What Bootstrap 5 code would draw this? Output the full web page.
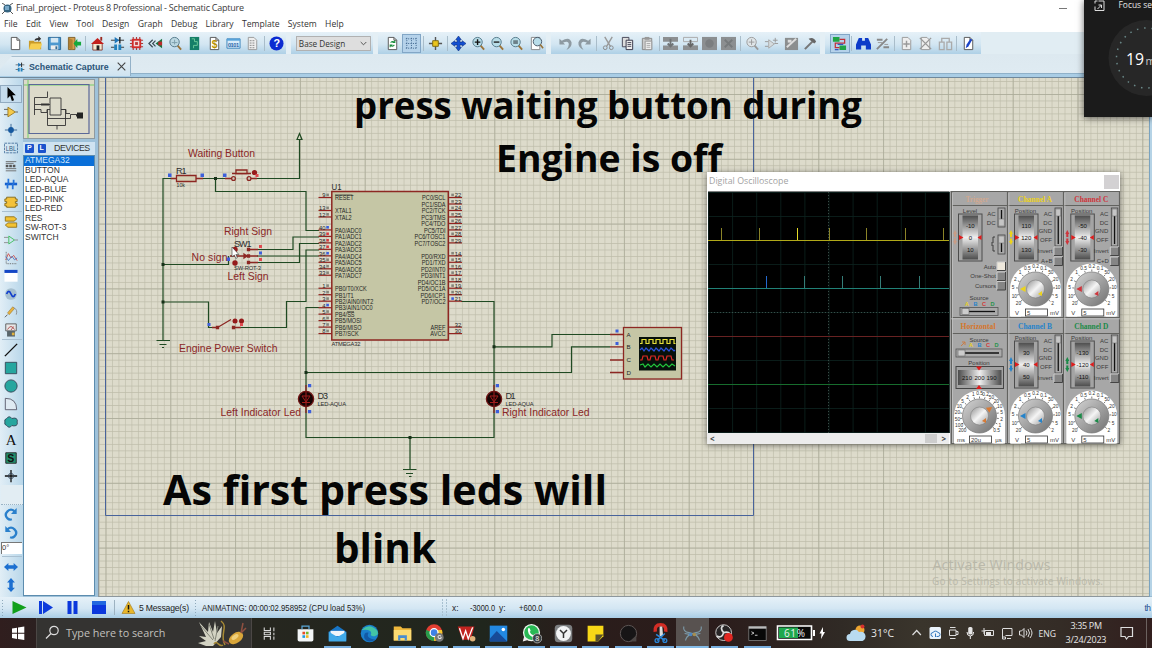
<!DOCTYPE html>
<html lang="en">
<head>
<meta charset="utf-8">
<title>Final_project - Proteus 8 Professional - Schematic Capture</title>
<link href="https://cdn.jsdelivr.net/npm/bootstrap@5.3.0/dist/css/bootstrap.min.css" rel="stylesheet">
<style>
html,body{width:1152px;height:648px;overflow:hidden}
body{font-family:"Open Sans","Noto Sans",sans-serif;font-size:8.6px;line-height:1.2;color:#333;background:#dfebf2}
svg{display:block;flex:none}
svg text{white-space:pre}
.titlebar{height:17px;background:#fff;font-size:9px;letter-spacing:-.23px;padding-left:2px;gap:3px;color:#3c3c3c}
.menubar{height:15px;background:#fff;padding-left:4px;gap:8.3px;font-size:8.6px;color:#333}
.toolrow{height:22px;background:#e1edf3}
.toolstrip{height:22px;background:linear-gradient(#e6f1f8,#d3e6f2 55%,#aed0e6);padding-left:6.3px;width:981px}
.tool{width:19.4px;height:19px;flex:none}
.tool.on{background:#b5d2ea;box-shadow:inset 0 0 0 1px #82a6c6}
.tsep{width:4.15px;height:15px;flex:none;background:linear-gradient(#a9bdca,#a9bdca) center/1px 100% no-repeat}
.tgap{width:9.8px;height:22px;flex:none;background:linear-gradient(90deg,#e4eff5 5px,transparent 5px)}
.combo{width:75px;height:15px;background:#dedede;border:1px solid #b1b1b1;font:8.2px "Open Sans",sans-serif;padding:0 3px 0 2px;margin-right:2px}
.tabrow{height:24px;background:linear-gradient(#dde9f0,#dfebf2);border-bottom:1px solid #6f889b;box-shadow:inset 0 -3px #a9cde5,inset 0 -4px #8fb1c9}
.doctab{width:131px;height:20px;background:linear-gradient(#e5eff5,#cfe3f0);border-right:1px solid #93b1c8;border-top:1px solid #a9c0d0;clip-path:polygon(12px 0,100% 0,100% 100%,0 100%,0 13px);padding-left:15px;margin-top:2px;font:bold 8.8px "Liberation Sans",sans-serif;color:#2c5578;gap:4px}
.main{height:519px}
.side{width:23px;background:linear-gradient(90deg,#e1eef6,#b9d7ea);padding-top:6.5px}
.side .sic{height:18px;width:22px}
.side .sic.on{background:#c5dced;box-shadow:inset 0 0 0 1px #92abc1}
.side .ssep{height:2px;border-top:1px solid #a9c0d1;width:20px;margin-left:2px}
.angle{width:21px;height:12px;background:#fff;border:1px solid #777;border-width:1px 0 0 1px;font:7.5px "Liberation Sans",sans-serif;margin:1px 0 0 1px;flex:none}
.panel{width:75px;background:#9fc2da;padding:.5px 3px 1px 0}
.preview{height:60px;border:1px solid #8f9aa0;background:#dcdaca}
.devhead{height:13.5px;margin-top:3px;background:#cfe3f1;font:8.8px "Liberation Sans",sans-serif;color:#333;padding-left:2px;gap:4px}
.devhead b{background:#1b53cd;color:#fff;width:8.5px;height:8.5px;border-radius:1px;font-size:7px;line-height:8.5px;text-align:center}
.devlist{background:#fff;border:1px solid #5c8cae;font:8.5px/9.62px "Liberation Sans",sans-serif;color:#333}
.devlist div{padding-left:1px}
.devlist .sel{background:#0a6fd8;color:#d5e8fb}
.statusbar{height:21px;background:linear-gradient(#e6f1f8,#d3e6f3 55%,#a9cde5);font:8.4px "Liberation Sans",sans-serif;color:#222}
.taskbar{height:30px;background:linear-gradient(90deg,#301e1e 0,#2c2020 3%,#2b2926 12%,#26261f 22%,#20261d 42%,#2a1d1b 50%,#2b1c1b 62%,#302a25 73%,#3a352c 80%,#342c26 92%,#321f1e 100%);color:#ddd}
.searchbox{width:216px;height:30px;background:#343331;border-left:1px solid #4b4745;border-right:1px solid #4b4745;font-size:10.8px;color:#c2c0bd}
.applist{padding-left:1px}
.app{width:32.27px;height:30px;flex:none}
.app.first{margin-right:3.7px;margin-left:.3px}
.app.run{background:linear-gradient(#78aede,#78aede) center bottom/27px 2.4px no-repeat}
.app.front{background:linear-gradient(#84bce8,#84bce8) center bottom/100% 2.4px no-repeat,#585250}
.focusbox{left:1083.5px;top:0;width:69px;height:116.5px;z-index:4;box-shadow:0 1px 7px #0009}
.minimize{left:1056px;top:5px}
.scope{left:707px;top:172px;width:413px;height:272px;z-index:3;background:#fff;box-shadow:0 1px 6px #0008}
.scopebar{height:19px;color:#a3a3a3;font-size:8.8px;padding:0 1px 0 2px}
.closebtn{width:15px;height:14px;background:#d3d1d3}
.hscroll{height:11px;background:#ececec;width:242px;padding:0 3px}
.hscroll i{font-style:normal;font-weight:bold;font-size:8px;color:#444}
.thumb{width:12px;height:9px;background:#cdcdcd}
</style>
</head>
<body class="d-flex flex-column position-relative">
<header>
  <div class="titlebar d-flex align-items-center"><svg width="11" height="12" viewBox="0 0 11 12"><path d="M0 0l3 2M11 0L8 2M0 11l3-3M11 11L8 8" stroke="#555"/><circle cx="5.5" cy="5.5" r="4" fill="#356481"/><path d="M3 3h4v4H3z" fill="#78a8c8"/></svg><span>Final_project - Proteus 8 Professional - Schematic Capture</span></div>
  <nav class="menubar d-flex align-items-center"><span>File</span><span>Edit</span><span>View</span><span>Tool</span><span>Design</span><span>Graph</span><span>Debug</span><span>Library</span><span>Template</span><span>System</span><span>Help</span></nav>
  <div class="toolrow"><div class="toolstrip d-flex align-items-center" id="tools"></div></div>
  <div class="tabrow d-flex"><div class="doctab d-flex align-items-center"><span data-i="caps"></span><span>Schematic Capture</span><svg class="ms-1" width="9" height="9" viewBox="0 0 9 9"><path d="M.7.7l7.600 7.600M8.300.7L.7 8.300" stroke="#444" stroke-width="1.100"/></svg></div></div>
</header>
<main class="main d-flex">
  <aside class="side d-flex flex-column" id="side"></aside>
  <section class="panel d-flex flex-column">
    <div class="preview"><svg width="70" height="58" viewBox="24 79.5 70 58"><path d="M28 79v59M24 84.500h70" stroke="#72cf68"/><path d="M29 84h60v49H29z" fill="none" stroke="#5b6898" stroke-width="1.200"/><g fill="none" stroke="#333" stroke-width=".9"><path d="M50 97.500h11v17H50zM34.500 114.500V97h13v-6M35 104h15M34 109h7v3h6v-3h3M47.500 109v16h18v-16h-4M47.500 118h23v-4h8M61 109h5v4h4M57 125v4"/><path d="M41 104h8M76 115h6" stroke-width="2"/></g><path d="M77 112h6v6h-6z" fill="#222"/></svg></div>
    <div class="devhead d-flex align-items-center"><b>P</b><b>L</b><span class="ms-1" style="letter-spacing:-.4px">DEVICES</span></div>
    <div class="devlist flex-fill"><div class="sel">ATMEGA32</div><div>BUTTON</div><div>LED-AQUA</div><div>LED-BLUE</div><div>LED-PINK</div><div>LED-RED</div><div>RES</div><div>SW-ROT-3</div><div>SWITCH</div></div>
  </section>
  <svg id="sheet" width="1054" height="519" viewBox="98 78 1054 519" font-family="Liberation Sans, sans-serif">
    <defs>
      <pattern id="g1" x="105.500" y="94" width="6.480" height="6.480" patternUnits="userSpaceOnUse"><path d="M0 0H6.480M0 0V6.480" stroke="#bdbca9" stroke-width="1.300"/></pattern>
      <pattern id="g2" x="105.500" y="94" width="64.800" height="64.800" patternUnits="userSpaceOnUse"><path d="M0 .3H64.800M.3 0V64.800" stroke="#a9a997" stroke-width=".9"/></pattern>
    </defs>
    <rect x="98" y="78" width="1054" height="519" fill="#dddbcb"/>
    <rect x="98" y="78" width="1054" height="519" fill="url(#g1)"/>
    <rect x="98" y="78" width="1054" height="519" fill="url(#g2)"/>
    <path d="M98.500 78V597M98 596.500H1150" stroke="#8d979d"/>
    <path d="M105.500 78V515.500H753.500V78" fill="none" stroke="#48639b"/>
    <path d="M1149.500 78V597h3V78z" fill="#b5d3e6" stroke="#7ba3bf"/>
    <g id="wires" fill="none" stroke="#1f4a22" stroke-width="1.200">
      <path d="M171 178.500H163V340M203 178.500H225M257 178.500H299.500V139M297 139.500L299.500 133.500 302 139.500zM215.500 178.500V191.500H306V230.500H319M163 264.500H228.500V256M257 249.500H293V237H319M257 256H319M257 262.500H299.500V243.500H319M163 302H208.500V327.500H212M237 327.500H286.500V301.500H306V250H319M319 307.500H306V391M306 407V437.500H494V407M494 391V301.500H461M494 346.800H552V334.500H610M306 372.500H571.500V346.800H610M410 437.500V469.500M403 469.500h13.500M406 473.500h7M409 476.500h2.500M156.500 340.500h13.500M159.500 344.500h7M162 347.500h2"/>
    </g>
    <g fill="#173018"><path d="M214 177h3v3h-3zM161.500 263h3v3h-3zM161.500 300.500h3v3h-3zM492.500 345.300h3v3h-3zM304.500 371h3v3h-3zM408.500 436h3v3h-3z"/></g>
    <g id="parts" fill="none" stroke="#8d2722" stroke-width="1.300">
      <path d="M171 178.500h5M196 178.500h7M225 178.500h6M251 178.500h6M232 173.500h19M212 327.500h5M217.500 327.500L231 319.500M230 256H246M250 249.500h8M250 256h8M250 262.500h8M233 327.500h8M610 334.500h13M610 346.800h13M610 360h13M610 372.500h13M306 385v28M494 385v28"/>
      <path d="M176.500 175.500h19.500v6h-19.500zM236 173.500v-3.500h11v3.500z" fill="#d3cfb4"/>
      <circle cx="233.500" cy="178.500" r="1.900"/><circle cx="249" cy="178.500" r="1.900"/>
      <path d="M247.500 248.500h2v2h-2zM247.500 255h2v2h-2zM247.500 261.500h2v2h-2zM216.500 326.500h2v2h-2zM232.500 326.500h2v2h-2zM244 254l3 2-3 2z" fill="#8d2722"/>
      <rect x="331.800" y="191.500" width="116.500" height="148.500" fill="#c5c6a5" stroke-width="1.500"/>
      <rect x="623.500" y="327.500" width="58" height="51.500" fill="#c5c6a5"/>
    </g>
    <g fill="#951b1b"><circle cx="254.500" cy="172.500" r="2.600"/><circle cx="235" cy="249.500" r="2.700"/><circle cx="235" cy="263" r="2.700"/><circle cx="235" cy="321" r="2.500"/><circle cx="241.500" cy="321" r="2.500"/></g>
    <g fill="#e04a50"><path d="M255.500 174h3v3h-3zM259 245h3v3h-3zM259 258h3v3h-3zM240 323h3v3h-3z"/></g>
    <g fill="#3c5fdb"><path d="M168 173.500h3.500v3.500H168zM200.500 173.500h3.500v3.500h-3.500zM223 173.500h3.500v3.500H223zM259 251.500h3v3h-3zM226.500 257.500h3.500v3.500h-3.500zM207.500 323h3v3h-3zM308 384h3.200v3.200H308zM308 410h3.200v3.200H308zM495.800 384h3.200v3.200h-3.200zM495.800 410h3.200v3.200h-3.200zM615.500 329.500h3v3h-3zM615.500 342h3v3h-3z"/></g>
    <g id="leds"></g>
    <g id="pins" font-size="6.300" fill="#262626"></g>
    <rect x="639" y="337" width="37" height="33.500" fill="#07110b"/>
    <g fill="none" stroke-width="1.200"><path d="M640 343.500h2v-4h4v4h3v-4h4v4h3v-4h4v4h3v-4h4v4h3v-4h4v4h1.500" stroke="#e6df3b"/><path d="M640 350l2-2 2 3 2-3 3 3 2-3 3 3 2-3 3 3 2-3 3 3 2-3 3 3 2-3 3 3 1-1" stroke="#2b52dd"/><path d="M640 360h2l1-4h4l1 4h2l1-4h4l1 4h2l1-4h4l1 4h2l1-4h4l1 4h2" stroke="#dd2a25"/><path d="M640 365l3-1 2 3 3-3 3 3 3-3 3 3 3-3 3 3 3-3 3 3 3-3 3 2" stroke="#22c53c"/></g>
    <g fill="#252525" font-size="6.200"><text x="626.500" y="336.700">A</text><text x="626.500" y="349.200">B</text><text x="626.500" y="362.200">C</text><text x="626.500" y="374.900">D</text></g>
    <g fill="#2c2c2c" font-size="9"><text x="176" y="174.300" textLength="10.500">R1</text><text x="234" y="247.300" textLength="17.500">SW1</text><text x="331.500" y="190" textLength="10" lengthAdjust="spacingAndGlyphs">U1</text><text x="317.500" y="398.700" textLength="10.500">D3</text><text x="505.500" y="398.700" textLength="10">D1</text></g>
    <g fill="#2c2c2c" font-size="5.800"><text x="176.500" y="187" textLength="8.500" lengthAdjust="spacingAndGlyphs">10k</text><text x="234" y="269.800" textLength="27">SW-ROT-3</text><text x="331.500" y="346" textLength="29">ATMEGA32</text><text x="317.500" y="405.500" textLength="28.500">LED-AQUA</text><text x="505.500" y="405.500" textLength="28">LED-AQUA</text></g>
    <g fill="#8b2727" font-size="10.400"><text x="188" y="157" textLength="67">Waiting Button</text><text x="224" y="235" textLength="48">Right Sign</text><text x="191.500" y="261" textLength="36">No sign</text><text x="227.500" y="280" textLength="41">Left Sign</text><text x="179" y="351.500" textLength="98.500">Engine Power Switch</text><text x="220.500" y="416" textLength="80.500">Left Indicator Led</text><text x="502" y="416" textLength="87.500">Right Indicator Led</text></g>
    <path d="M232 247v10l2.300-2 1.500 3.400 1.600-.7-1.500-3.200h3z" fill="#fff" stroke="#333" stroke-width=".6"/>
    <g font-family="Open Sans, sans-serif" font-weight="700" fill="#050505" font-size="38"><text x="354" y="119" textLength="508" lengthAdjust="spacingAndGlyphs">press waiting button during</text><text x="496" y="172" textLength="226" lengthAdjust="spacingAndGlyphs">Engine is off</text><g font-size="41.500"><text x="163" y="504.500" textLength="444" lengthAdjust="spacingAndGlyphs">As first press leds will</text><text x="334" y="563" textLength="102" lengthAdjust="spacingAndGlyphs">blink</text></g></g>
    <g font-family="Open Sans, sans-serif" fill="#b9b8aa"><text x="932.500" y="569.500" font-size="14.200" textLength="118">Activate Windows</text><text x="932" y="585" font-size="10" textLength="171">Go to Settings to activate Windows.</text></g>
  </svg>
</main>
<footer>
  <div class="statusbar d-flex align-items-center">
    <svg width="197" height="21" viewBox="0 597 197 21"><path d="M2.500 600v16" stroke="#8fa9bb" stroke-dasharray="1 2"/><path d="M12.500 601l14 6.500-14 6.500z" fill="#12a01c"/><path d="M39 601h3v13h-3zM43 601l10 6.500-10 6.500z" fill="#0d3bdc"/><path d="M67.500 601h4v13h-4zM73.500 601h4v13h-4zM92 601h14v13H92z" fill="#0b37dc"/><path d="M92 601h14v4H92z" fill="#2167e0"/><path d="M114.500 600v15" stroke="#9db2c1"/><path d="M128.500 601.500l6.500 12h-13z" fill="#e9b72a" stroke="#a58127" stroke-width=".7"/><path d="M128.500 605v4.500M128.500 610.700v1.500" stroke="#111" stroke-width="1.500"/><text x="139" y="611" font-size="8.600" textLength="50" fill="#222">5 Message(s)</text><path d="M195.500 600v16" stroke="#8fa9bb" stroke-dasharray="1 2"/></svg>
    <svg width="955" height="21" viewBox="197 597 955 21"><path d="M442.500 599v17M446.500 599v17" stroke="#a8c0d0" stroke-dasharray="2 1"/><g font-size="8.400" fill="#222"><text x="202" y="611" textLength="163" lengthAdjust="spacingAndGlyphs">ANIMATING: 00:00:02.958952 (CPU load 53%)</text><text x="452" y="611">x:</text><text x="470" y="611" textLength="25" lengthAdjust="spacingAndGlyphs">-3000.0</text><text x="499" y="611">y:</text><text x="519" y="611" textLength="23.500" lengthAdjust="spacingAndGlyphs">+600.0</text><text x="1144.500" y="611" fill="#1b4b91" textLength="6.500">th</text></g></svg>
  </div>
  <div class="taskbar d-flex align-items-center">
    <svg width="36" height="30" viewBox="0 0 36 30"><path d="M12 10.500l5-.8v5.100h-5zM18 9.500l6.300-1v6.300H18zM12 15.800h5v5.100l-5-.8zM18 15.800h6.300v6.200l-6.300-1z" fill="#fff"/></svg>
    <div class="searchbox d-flex align-items-center"><svg width="29" height="30" viewBox="36 0 29 30"><circle cx="53" cy="12.500" r="4.200" fill="none" stroke="#ddd" stroke-width="1.200"/><path d="M50 15.500l-5 5" stroke="#ddd" stroke-width="1.300"/></svg><span>Type here to search</span>
      <svg class="ms-auto" width="54" height="30" viewBox="197 0 54 30"><path d="M199 4l9 10 1-10 4 10 2-11 2 12 5-7-1 11-8 9h-7l-8-3 8-2-7-5 7 1z" fill="#d3d3c3"/><path d="M201 8l12 14M209 6l5 15M218 8l-3 15" stroke="#828477"/><path d="M221 3c8 6-2 13 4 24M214 26c3-5 5 4 9 1" fill="none" stroke="#a88b35" stroke-width="1.500"/><ellipse cx="236" cy="20" rx="8" ry="5" fill="#d9a63a" transform="rotate(-35 236 20)"/><ellipse cx="235" cy="19" rx="4" ry="2" fill="#efd07c" transform="rotate(-35 235 19)"/><path d="M241 15l2-10M241 15l5-5M229 26l-6-3" stroke="#8f5040" stroke-width="1.500"/></svg></div>
    <div class="applist d-flex" id="apps"></div>
    <svg id="tray" width="376" height="30" viewBox="774 618 376 30" font-family="Open Sans, sans-serif" fill="#e6e6e6">
      <path d="M778.500 626h34v13.500h-34z" fill="#080808" stroke="#fff" stroke-width="1.600"/><path d="M780 627.500h19v10.500h-19z" fill="#1fa84d"/><path d="M814 630h2v6h-2z" fill="#fff"/><text x="785" y="636.600" font-size="10" textLength="21" fill="#f0f0f0">61%</text><path d="M824 627l-3.500 6.500h2l-.5 5.500 4-7h-2z" fill="#fff"/>
      <circle cx="861" cy="630" r="4.500" fill="#eea631"/><circle cx="863.500" cy="626.500" r="2" fill="#d5312d"/><path d="M851 641a3.500 3.500 0 010-7 5 5 0 019-2 4.500 4.500 0 013.500 9z" fill="#b9dbf0"/>
      <text x="872" y="637" font-size="10.400" textLength="23">31°C</text><path d="M913.500 635l4.200-4.500 4.200 4.500" fill="none" stroke="#ddd" stroke-width="1.200"/>
      <rect x="930.500" y="627" width="11.500" height="12" rx="1.500" fill="#eaf3fb"/><path d="M934 636.500a2 2 0 010-4 3 3 0 015 0 2 2 0 010 4h-1.500M936.500 637v-3.500" fill="none" stroke="#3478be"/>
      <g fill="none" stroke="#ddd"><path d="M950.500 630h6.500v5.500h-6.500zM957 631.500h2v3h-2M951 627.500h5.500M951 638.500h5.500"/><path d="M985.500 630.500h9v5h-9zM985 628v6M982.500 631h4"/><path d="M1003.500 628.500h9.500v7h-6.500M1003.500 629v8h3v2h-3zM1008 638.500h4"/><path d="M1020.500 631h2l2.500-2.500v9l-2.500-2.500h-2zM1027 630.500q2 2.500 0 5M1029 629q3 4 0 8M1031 628q4 5 0 10"/></g><path d="M987 632h5v3h-5z"/><rect x="969.200" y="627" width="4.300" height="7.500" rx="1.500"/><path d="M968 632q0 4 3.300 4t3.300-4M971.300 636v3" fill="none" stroke="#eee"/>
      <text x="1039.500" y="637" font-size="9.600" textLength="17.500" lengthAdjust="spacingAndGlyphs">ENG</text><text x="1071.500" y="629" font-size="9" textLength="31.500">3:35 PM</text><text x="1066.500" y="643" font-size="9" textLength="41">3/24/2023</text>
      <path d="M1122 627.500h11.500v9h-4l-2 2.500-1.500-2.500h-4z" fill="none" stroke="#ddd" stroke-width="1.200"/><path d="M1147.500 618v30" stroke="#6c625f"/>
    </svg>
  </div>
</footer>
<section class="scope position-absolute">
  <div class="scopebar d-flex align-items-center justify-content-between"><span>Digital Oscilloscope</span><div class="closebtn"></div></div>
  <div class="d-flex">
    <div><svg id="trace" width="243" height="242" viewBox="707 191 243 242"></svg>
      <div class="hscroll d-flex align-items-center"><i>&lt;</i><span class="thumb ms-auto me-1"></span><i>&gt;</i></div></div>
    <svg id="knobs" width="170" height="253" viewBox="950 191 170 253" font-family="Liberation Sans, sans-serif"></svg>
  </div>
</section>
<aside class="focusbox position-absolute">
  <svg width="69" height="117" viewBox="1083.500 0 69 117" font-family="Open Sans, sans-serif"><rect x="1083" y="0" width="70" height="117" fill="#1b1b1b"/><circle cx="1146" cy="58" r="38" fill="#272727"/><circle cx="1146" cy="58" r="30" fill="none" stroke="#6a8888" stroke-width="1.500" stroke-dasharray="1.500 5.800"/><path d="M1098 1h5.500v9.500h-9v-4M1094.500 3.500V1H1097M1098 5h3v3M1101 5l-4 4" fill="none" stroke="#ddd"/><text x="1118" y="8" font-size="8.600" textLength="33.500" lengthAdjust="spacingAndGlyphs" fill="#e5e5e5">Focus se</text><text x="1125.500" y="64.500" font-size="17" textLength="18" lengthAdjust="spacingAndGlyphs" fill="#fff">19</text><text x="1145" y="64.500" font-size="11" fill="#c9c9c9">m</text></svg>
</aside>
<svg class="minimize position-absolute" width="14" height="6" viewBox="0 0 14 6"><path d="M3 3.500h8" stroke="#777"/></svg>
<script src="https://cdn.jsdelivr.net/npm/bootstrap@5.3.0/dist/js/bootstrap.bundle.min.js"></script>
<script>
// 16x16 icon bodies
const page='<path d="M3.500 1.500h6l3 3v10h-9z" fill="#fff" stroke="#555"/><path d="M9.500 1.500v3h3" fill="none" stroke="#555"/>';
const gpage='<path d="M3.500 1.500h6l3 3v10h-9z" fill="#eee" stroke="#999"/>';
const lens=(f,s)=>`<path d="M10 10l4 4.500" stroke="#9c7438" stroke-width="2"/><circle cx="7" cy="6.500" r="5" fill="${f||'#b8dde8'}" stroke="#517687"/>${s||''}`;
const I={
 neu:page,
 open:'<path d="M1 5h5l1 1h7v8H1z" fill="#c89a2a"/><path d="M3 8h12l-2 6H1z" fill="#f7cf50"/><path d="M7 5q0-3 4-3V0l3 3-3 3V4" fill="#333"/>',
 save:'<path d="M1.500 1.500h13v13h-13z" fill="#4d98cf" stroke="#2a6798"/><path d="M4 2h8v5H4z" fill="#d5e7f2"/><path d="M4 10h8v4.500H4z" fill="#eee"/><path d="M9 11h2v3H9z" fill="#356b92"/>',
 exit:'<path d="M1.500 1.500h7v13h-7z" fill="#d4a04c" stroke="#80602b"/><path d="M2 2l4 2v11l-4-2z" fill="#b07f32"/><path d="M15 6v4h-4v3L7 8l4-5v3z" fill="#14a83c"/>',
 home:'<path d="M3 8h10v7H3z" fill="#f3e8cf" stroke="#884038"/><path d="M1 8.500L8 2l7 6.500z" fill="#c3201c"/><path d="M11 1h2v4h-2z" fill="#9b2a20"/><path d="M7 10h3v5H7z" fill="#222"/>',
 caps:'<path d="M1 4.500h14M1 12h4M11 12h4" stroke="#333"/><path d="M5 1l5 3.500-5 3.500z" fill="#1e76b9"/><path d="M10.500 1v7" stroke="#222" stroke-width="1.500"/><path d="M4.500 9h3v6h-3zM9 9h3v6H9z" fill="#2181bd"/>',
 chip:'<path d="M4.500 1v14M8 1v14M11.500 1v14M1 4.500h14M1 8h14M1 11.500h14" stroke="#a83a3a" stroke-width="1.200"/><path d="M3 3h10v10H3z" fill="#d12c2c"/><path d="M5 5h6v6H5z" fill="#f0dada"/><path d="M6.500 6.500h3v3h-3z" fill="#b33"/>',
 d3:'<path d="M8 8l7-5v10z" fill="#1a7340"/><path d="M11 6h4v4h-4z" fill="#bb2b2b"/><path d="M5 4L1 8l4 4M8 5L5 8l3 3" fill="none" stroke="#3b4c55" stroke-width="1.300"/>',
 find:lens('#bcd8e2','<path d="M4 7h6M7 4v5" stroke="#7e9fac"/>'),
 book:'<path d="M3 1h10v14H3z" fill="#157f68"/><path d="M5 3h3v3h3v4H7v3" fill="none" stroke="#6dcc9a"/>',
 bom:page+'<text x="5" y="12.500" font-size="11" font-weight="700" fill="#b79100">$</text>',
 bin:'<path d="M1 3h14v10H1z" fill="#d9ecfa" stroke="#3c83bc"/><path d="M1 3h14v2H1z" fill="#58a3da"/><text x="2" y="11.500" font-size="6" font-weight="700" textLength="12" fill="#1f63a6">0101</text>',
 rep:gpage+'<path d="M5 5h5M5 7.500h6M5 10h5M5 12.500h6" stroke="#888" stroke-dasharray="2 1"/>',
 help:'<circle cx="8" cy="8" r="7.500" fill="#0b2bd1"/><text x="4.800" y="12" font-size="11.500" font-weight="700" fill="#fff">?</text>',
 refr:page+'<path d="M6 7q2-2 4-.5M10 9.500q-2 2.500-4 .5M10.500 4.500v2.500H8M5.500 12V9.500H8" fill="none" stroke="#178d3b" stroke-width="1.100"/>',
 grid:'<path d="M2 3h12M2 8h12M2 13h12M3 2v12M8 2v12M13 2v12" stroke="#345c85" stroke-dasharray="1 1.500"/>',
 orig:'<path d="M8 1v14M1 8h14" stroke="#555" stroke-width="1.500"/><path d="M5 5h6v6H5z" fill="#eac51e" stroke="#7d6914"/>',
 pan:'<path d="M8 0l3 4H9.500v2.500H12V5l4 3-4 3V9.500H9.500V12H11l-3 4-3-4h1.500V9.500H4V11L0 8l4-3v1.500h2.500V4H5z" fill="#1450d2" stroke="#0a2a79" stroke-width=".6"/>',
 zin:lens('','<path d="M4 6.500h6M7 3.500v6" stroke="#111" stroke-width="1.500"/>'),
 zout:lens('','<path d="M4 6.500h6" stroke="#222" stroke-width="1.500"/>'),
 zall:lens('','<path d="M4.500 4.500h5v4h-5z" fill="#6c8088"/>'),
 zsel:'<path d="M2.500 1.500h9v13h-9z" fill="#fff" stroke="#888"/><circle cx="9" cy="6" r="4.500" fill="#b9dde9" stroke="#456"/><path d="M12 9l3 4" stroke="#967238" stroke-width="1.600"/>',
 undo:'<path d="M1.500 3v6h6L5.500 7q6-2.500 6 2 0 3-2.500 6 6-3 5.500-8-2-7-10.500-2z" fill="#8e9aa2"/>',
 redo:'<path d="M14.500 3v6h-6l2-2q-6-2.500-6 2 0 3 2.500 6-6-3-5.500-8 2-7 10.500-2z" fill="#8e9aa2"/>',
 cut:'<path d="M4 1l6 10M12 1L6 11" stroke="#999" stroke-width="1.500"/><circle cx="4.500" cy="12.500" r="2" fill="none" stroke="#888"/><circle cx="11" cy="12.500" r="2" fill="none" stroke="#888"/>',
 copy:'<path d="M2.500 1.500h7v10h-7z" fill="#ddd" stroke="#445"/><path d="M6.500 4.500h7v10h-7z" fill="#eee" stroke="#334"/><path d="M8 7h4M8 9h4M8 11h4" stroke="#445"/>',
 paste:'<path d="M2.500 2.500h10v12h-10z" fill="#ccc" stroke="#888"/><path d="M5 1h5v3H5z" fill="#999"/><path d="M5.500 5.500h7v9h-7z" fill="#eee" stroke="#999"/><path d="M7 8h4M7 10h4M7 12h4" stroke="#aaa"/>',
 bcopy:'<path d="M0 1h16v5H0zM0 10h16v5H0z" fill="#8c8f91"/><path d="M8 3v8M5 8l3 3 3-3" fill="none" stroke="#6f7375" stroke-width="2"/>',
 bmove:'<path d="M0 10h16v5H0z" fill="#8c8f91"/><path d="M.5 1.500h15v4.500H.5z" fill="none" stroke="#aaa"/><path d="M8 4v7M5 8l3 3 3-3" fill="none" stroke="#666" stroke-width="2"/>',
 brot:'<path d="M0 1h16v14H0z" fill="#8c8f91"/><circle cx="8" cy="8" r="4.500" fill="#7b7e80"/>',
 bdel:'<path d="M0 1h16v14H0z" fill="#8c8f91"/><path d="M4 4l8 8M12 4l-8 8" stroke="#767a7c" stroke-width="2"/>',
 pick:'<path d="M10 10l4 4.500" stroke="#999" stroke-width="2"/><circle cx="7" cy="6.500" r="5" fill="#dfe5e8" stroke="#999"/><path d="M4 6.500h6M7 3.500v6" stroke="#999"/>',
 make:'<path d="M1 6h4M1 11h4M11 8h4" stroke="#999"/><path d="M5 4l6 4.500-6 4.500z" fill="#d5dcdf" stroke="#aaa"/><path d="M12 2v5M9.500 4.500h5" stroke="#999"/>',
 pack:'<path d="M1 2h14v13H1z" fill="#8b8e8f"/><path d="M3 12L13 3" stroke="#ddd" stroke-width="2"/><path d="M4 4h4v3H4z" fill="#ddd"/>',
 ham:'<path d="M2 14l8-8" stroke="#777" stroke-width="2.200"/><path d="M6 3q5-3 8 3l-2 2-5-4z" fill="#666"/>',
 auto:'<path d="M1 1h7v5H1zM8 10h7v5H8z" fill="#21a445"/><path d="M8 3.500h5.500v4H3.500v5H8" fill="none" stroke="#c22f36" stroke-width="1.300"/><path d="M6 9h6M3 14.500h4" fill="none" stroke="#3554be" stroke-width="1.300"/>',
 bino:'<path d="M3 2h3.500v3h3V2H13l3 7v5.500h-5.500V10h-5v4.500H0V9z" fill="#0d3bc9"/>',
 prop:'<path d="M2 14L13 3M2 4h6M9 12h6" stroke="#888" stroke-width="2"/><path d="M3 7h5M10 9h4" stroke="#999"/>',
 addp:gpage+'<path d="M8 5v7M4.500 8.500h7" stroke="#999" stroke-width="1.500"/>',
 delp:gpage+'<path d="M2 2l12 12M14 2L2 14" stroke="#999" stroke-width="1.500"/>',
 zoomp:'<path d="M1.500 6.500h5v8h-5zM9.500 6.500h5v8h-5zM4 6V2.500h8V6" fill="none" stroke="#aaa" stroke-width="1.400"/>',
 edit:page+'<path d="M5 13l1-4 4-6 2 1-4 7z" fill="#1a44c8"/>',
 arrow:'<path d="M4 0v13l3-3 2 6 2.500-1-2-5.500h4z" fill="#000"/>',
 comp:'<path d="M0 5h5M0 11h5M13 8h3" stroke="#555"/><path d="M4.500 2.500v11L13 8z" fill="#f5ca4a" stroke="#9c7820"/>',
 junc:'<path d="M8 1v14M1 8h14" stroke="#2d5b8f"/><circle cx="8" cy="8" r="3.300" fill="#15589f"/>',
 lbl:'<path d="M.5 2.500h15v11H.5z" fill="none" stroke="#456f9b" stroke-dasharray="3 1"/><text x="2" y="11.300" font-size="9" textLength="12" lengthAdjust="spacingAndGlyphs" fill="#30597f">LBL</text>',
 txt:'<path d="M2 3h12M2 5h9M2 11h12M2 13.500h12" stroke="#666"/><path d="M2 8h12" stroke="#555" stroke-width="3" stroke-dasharray="3 1"/>',
 bus:'<path d="M1 8h14" stroke="#1560cf" stroke-width="3"/><path d="M5 2v6M11 3v5M4 8v5M10 8v6" stroke="#2674da" stroke-width="2"/>',
 sub:'<path d="M3 2.500h10v2h2v3h-2v2h2v3h-2v1.500H3v-1.500H1v-3h2v-2H1v-3h2z" fill="#f3c23b" stroke="#806718"/>',
 term:'<path d="M1.500 2h10l3 2.500-3 2.500h-10zM14.500 9h-10l-3 2.500 3 2.500h10z" fill="#f3c232" stroke="#8f7018"/>',
 pin:'<path d="M0 5h5M0 11h5M12 8h4" stroke="#888"/><path d="M5.500 3.500v9L12 8z" fill="none" stroke="#38bd58"/>',
 graph:'<path d="M2.500 1v13.500H15" fill="none" stroke="#555" stroke-dasharray="1 1"/><path d="M2 10l3-7 3 5 3-3 4 6" fill="none" stroke="#d14a45"/><path d="M2 6l3 5 4-5 3 4 3-2" fill="none" stroke="#4977be"/>',
 pop:'<path d="M.5 1.500h15v13H.5z" fill="#fff"/><path d="M.5 1h15v3.500H.5z" fill="#1447c5"/>',
 gen:'<circle cx="8" cy="8" r="6.700" fill="#a6bfcf"/><path d="M3 8q2.500-6 5 0t5 0" fill="none" stroke="#103ecd" stroke-width="2"/>',
 probe:'<path d="M1 14l3-3" stroke="#555"/><path d="M4 9l6-7 2 2-6 7z" fill="#e7b240" stroke="#926f25" stroke-width=".6"/><path d="M11 3q5 2 3 8" fill="none" stroke="#888"/>',
 meter:'<path d="M2 1h12v8H2z" fill="#e7e7e7" stroke="#555"/><path d="M4 7.500q4-7 8 0M8 8l3-4" fill="none" stroke="#a44"/><path d="M3.500 9h9v6.500h-9z" fill="#59666b"/><path d="M9 11h3v3H9z" fill="#e1b23c"/>',
 line:'<path d="M1 15L15 1" stroke="#111" stroke-width="1.600"/>',
 box:'<path d="M1.500 1.500h13v13h-13z" fill="#26a69f" stroke="#345"/>',
 circ:'<circle cx="8" cy="8" r="7" fill="#26a69f" stroke="#345"/>',
 arc:'<path d="M1.500 1.500q13 0 13 13h-13z" fill="#dfeaf2" stroke="#556"/>',
 path:'<path d="M1 8q-1-3 2-4 3-4 6 0 3-1 5 0 2 2 1 4 1 2-1 4-3 1-5 0-3 4-6 0-3-1-2-4z" fill="#26a69f" stroke="#345"/>',
 A:'<text x="2" y="14" font-family="Liberation Serif" font-size="17" fill="#111">A</text>',
 sym:'<path d="M2 2h12v12H2z" fill="#218e6c" stroke="#222"/><text x="3.800" y="12.500" font-size="12" font-weight="700" fill="#111">S</text>',
 mark2:'<path d="M8 1v14M1 8h14" stroke="#111" stroke-width="1.500"/><circle cx="8" cy="8" r="3" fill="none" stroke="#345"/>',
 cw:'<path d="M12 5Q8 1 4 5t0 8q2 2 5 1" fill="none" stroke="#2a80cc" stroke-width="2.600"/><path d="M14.500 1v7H8z" fill="#2a80cc"/>',
 ccw:'<path d="M4 5q4-4 8 0t0 8q-2 2-5 1" fill="none" stroke="#2a80cc" stroke-width="2.600"/><path d="M1.500 1v7H8z" fill="#2a80cc"/>',
 mh:'<path d="M0 8l5-4.500V6h6V3.500L16 8l-5 4.500V10H5v2.500z" fill="#1c6fd0"/>',
 mv:'<path d="M8 0L3.500 5H6v6H3.500L8 16l4.500-5H10V5h2.500z" fill="#1c6fd0"/>'
};
const ic=(n,s=16)=>`<svg width="${s}" height="${s}" viewBox="0 0 16 16" font-family="Liberation Sans">${I[n]}</svg>`;
document.querySelectorAll('[data-i]').forEach(e=>e.innerHTML=ic(e.dataset.i,10));
tools.innerHTML='neu open save exit | home caps chip d3 find book bom bin rep | help _ COMBO _ refr grid! | orig | pan zin zout zall zsel _ undo redo | cut copy paste | bcopy bmove brot bdel | pick make pack ham _ auto! | bino prop | addp delp zoomp | edit'.split(' ').map(t=>t=='|'?'<i class="tsep"></i>':t=='_'?'<i class="tgap"></i>':t=='COMBO'?'<div class="combo d-flex align-items-center justify-content-between"><span>Base Design</span><svg width="7" height="5" viewBox="0 0 7 5"><path d="M.7 1l2.800 2.800L6.300 1" fill="none" stroke="#555"/></svg></div>':`<div class="tool d-flex align-items-center justify-content-center${t.endsWith('!')?' on':''}">${ic(t.replace('!',''),15)}</div>`).join('');
side.innerHTML='arrow! comp junc lbl txt bus sub | term pin graph pop gen probe meter | line box circ arc path A sym mark2 GAP cw ccw ANG | mh mv'.split(' ').map(t=>t=='|'?'<div class="ssep"></div>':t=='GAP'?'<div style="height:20px;margin:0 0 0 1px;border-bottom:1px dotted #9ab4c6;background:#e2edf3"></div>':t=='ANG'?'<div class="angle">0°</div><div style="height:2px"></div>':`<div class="sic d-flex align-items-center justify-content-center${t.endsWith('!')?' on':''}">${ic(t.replace('!',''),14)}</div>`).join('');

// microcontroller pins: [row, number, name, colour]
const L=[[0,9,'RESET'],[2,13,'XTAL1'],[3,12,'XTAL2'],[5,40,'PA0/ADC0','b'],[6,39,'PA1/ADC1','r'],[7,38,'PA2/ADC2','r'],[8,37,'PA3/ADC3','r'],[9,36,'PA4/ADC4','b'],[10,35,'PA5/ADC5'],[11,34,'PA6/ADC6'],[12,33,'PA7/ADC7'],[14,1,'PB0/T0/XCK'],[15,2,'PB1/T1'],[16,3,'PB2/AIN0/INT2'],[17,4,'PB3/AIN1/OC0','b'],[18,5,'PB4/SS'],[19,6,'PB5/MOSI'],[20,7,'PB6/MISO'],[21,8,'PB7/SCK']];
const R=[...['PC0/SCL','PC1/SDA','PC2/TCK','PC3/TMS','PC4/TDO','PC5/TDI','PC6/TOSC1','PC7/TOSC2'].map((n,i)=>[i,22+i,n]),...['PD0/RXD','PD1/TXD','PD2/INT0','PD3/INT1','PD4/OC1B','PD5/OC1A','PD6/ICP1','PD7/OC2'].map((n,i)=>[9+i,14+i,n,i==7?'b':'']),[20,32,'AREF'],[21,30,'AVCC']];
const col={b:'#3c5fdb',r:'#d83a40'};let h='';
for(const [r,n,t,c] of L){const y=198+r*6.480;h+=`<path d="M318.500 ${y-.5}h13" stroke="#93231f" stroke-width="1.200"/><text class="pn" x="335" y="${y+2.300}">${t}</text><text x="325.500" y="${y-.6}" text-anchor="end" font-size="5.800">${n}</text><rect x="326.300" y="${y-4.400}" width="2.600" height="2.600" fill="${col[c]||'#85857a'}"/>`}
for(const [r,n,t,c] of R){const y=198+r*6.480;h+=`<path d="M449 ${y-.5}h13" stroke="#93231f" stroke-width="1.200"/><text class="pn" x="445.500" y="${y+2.300}" text-anchor="end">${t}</text><text x="454.800" y="${y-.6}" font-size="5.800">${n}</text>`+(r<20?`<rect x="451.300" y="${y-4.400}" width="2.600" height="2.600" fill="${col[c]||'#85857a'}"/>`:'')}
h+='<path d="M335 195h17.500M347 311.800h7" stroke="#262626" stroke-width=".7"/>';
pins.innerHTML=h;
// pin names are set slightly condensed
pins.querySelectorAll('.pn').forEach(t=>{t.setAttribute('textLength',(t.getComputedTextLength()*.89).toFixed(1));t.setAttribute('lengthAdjust','spacingAndGlyphs')});
leds.innerHTML=[306,494].map(x=>`<circle cx="${x}" cy="399" r="7.600" fill="#160404" stroke="#701414" stroke-width="1.300"/><path d="M${x-4} 396h8l-4 6zM${x-4} 402.500h8M${x} 392v14" fill="none" stroke="#a01d1d"/>`).join('');

// oscilloscope screen
h='<rect x="708" y="191.500" width="241.500" height="242" fill="#000"/>';
for(let i=0;i<=10;i++)h+=`<path d="M${708.500+i*24.100} 192V433M708 ${192.500+i*24}H949" stroke="#0d231f" stroke-width=".8"/>`;
h+='<path d="M828.500 192V433M708 312.500H949" stroke="#3a4c48" stroke-dasharray="1 2"/>';
h+='<path d="M708 240.500H949" stroke="#b1a919"/><path d="M708 288.500H949" stroke="#218177"/><path d="M708 336.500H949" stroke="#682222"/><path d="M708 384.500H949" stroke="#176c2d"/>';
[721.5,759.5,797.5,829.5,866.5,905.5,943.5].forEach((x,i)=>h+=`<path d="M${x} 228V240" stroke="${i==2?'#e5dc28':'#8b8428'}"/>`);
[766.5,804.5,842.5,880.5,919.5].forEach((x,i)=>h+=`<path d="M${x} 276V288" stroke="${i?'#357d78':'#2369cf'}"/>`);
trace.innerHTML=h;

// oscilloscope controls
const T=(x,y,s,o='')=>`<text x="${x}" y="${y}" font-size="6" fill="#3a3a3a" ${o}>${s}</text>`;
const E='text-anchor="end"',M='text-anchor="middle"';
const btn=(x,y,l)=>`<rect x="${x}" y="${y}" width="8.500" height="8.500" fill="${l?'#eee8dc':'#858585'}"/><path d="M${x} ${y+8.500}V${y}h8.500" fill="none" stroke="#ccc"/><path d="M${x} ${y+8.500}h8.500V${y}" fill="none" stroke="#444"/>`;
const vs=(x,y,w,hh,top=1)=>`<rect x="${x}" y="${y}" width="${w}" height="${hh}" fill="#aaa" stroke="#444" stroke-width=".8"/><path d="M${x+w/2} ${y+2}v${hh-4}" stroke="#111" stroke-width="1.300"/><rect x="${x+.8}" y="${top?y+1:y+hh-8}" width="${w-1.600}" height="7" fill="#c5c5c5" stroke="#777" stroke-width=".6"/>`;
const hs=(x,y,w)=>`<rect x="${x}" y="${y}" width="${w}" height="8" fill="#aaa" stroke="#555" stroke-width=".8"/><path d="M${x+3} ${y+4}h${w-6}" stroke="#111" stroke-width="1.300"/><rect x="${x+2}" y="${y+1}" width="7" height="6" fill="#ccc" stroke="#666" stroke-width=".6"/>`;
const wheel=(cx,cy,v)=>`<rect x="${cx-12}" y="${cy-23.500}" width="23.500" height="47" fill="#a4a4a4" stroke="#4c4c4c"/><rect x="${cx-8}" y="${cy-22}" width="15.500" height="44" fill="url(#wv)"/>`+v.map((s,i)=>T(cx-.2,cy-9.800+i*12,s,M+' style="fill:#111"')).join('')+`<path d="M${cx-11.500} ${cy-2.500}l4.500 2.500-4.500 2.500zM${cx+11} ${cy-2.500}l-4 2.500 4 2.500z" fill="#e01c1c"/>`;
function dial(cx,cy,c,lab,unit,val,ang){
 let s=`<path d="M${cx-25.500} ${cy+27.500}V${cy}a25.500 25.500 0 0151 0V${cy+27.500}z" fill="#fff"/>`;
 lab.forEach((t,i)=>{const a=(-220+i*260/(lab.length-1))*Math.PI/180,p=(r,f)=>(f?cy+r*Math.sin(a):cx+r*Math.cos(a)).toFixed(1);
  s+=`<path d="M${p(17.500)} ${p(17.500,1)}L${p(19.500)} ${p(19.500,1)}" stroke="#444" stroke-width=".7"/><text x="${p(22.300)}" y="${(+p(22.300,1)+1.600).toFixed(1)}" font-size="4.800" fill="#333" text-anchor="middle">${t}</text>`});
 s+=`<circle cx="${cx}" cy="${cy}" r="17" fill="url(#kn)" stroke="#777" stroke-width=".7"/><circle cx="${cx}" cy="${cy}" r="9" fill="url(#kc)" stroke="#777" stroke-width=".5"/>`;
 s+=`<path d="M${cx-15.500} ${cy}l5.500-3v6z" fill="${c}" transform="rotate(${ang} ${cx} ${cy})"/><path d="M${cx+2.500} ${cy+5}l4-3v5z" fill="${c}"/>`;
 s+=`<path d="M${cx-24.500} ${cy+20.500}h10v7h-10zM${cx+14} ${cy+20.500}h10v7h-10z" fill="#fff"/><rect x="${cx-10}" y="${cy+20}" width="22" height="7" fill="#fff" stroke="#333" stroke-width=".8"/>`+T(cx-8.500,cy+26,val)+T(cx-18.500,cy+25.800,unit[0],M)+T(cx+19,cy+25.800,unit[1],M);
 return s}
const VL=['20','10','5','2','1','0.5','0.2','0.1','50','20','10','5','2'];
const head=(x,y,t,c,w)=>`<text x="${x}" y="${y}" ${M} font-family="Liberation Serif" font-weight="700" font-size="8.800" fill="${c}" textLength="${w}" lengthAdjust="spacingAndGlyphs">${t}</text>`;
function chan(dx,dy,name,c,v,sum){
 const x=o=>o+dx,y=o=>o+dy;
 return head(x(1035),y(202),name,c,34)+T(x(1025.5),y(212.700),'Position',M)+wheel(x(1026.500),y(237.500),v)+
 `<path d="M${x(1011)} ${y(230)}l2 4h-1v3h-2v-3h-1zM${x(1011)} ${y(245)}l2-4h-1v-2.500h-2v2.500h-1z" fill="${c}"/>`+
 ['AC','DC','GND','OFF'].map((t,i)=>T(x(1052),y(216.300)+i*8.500,t,E)).join('')+vs(x(1055),y(208),6.500,38)+
 T(x(1052.500),y(253.300),'Invert',E)+btn(x(1054),y(247))+(sum?T(x(1052.500),y(263),sum,E)+btn(x(1054),y(257)):'')+dial(x(1035.500),y(289),c,VL,['V','mV'],'5',0)}
const abcd=(x,y)=>['A','B','C','D'].map((t,i)=>`<text x="${x+i*8.500}" y="${y}" font-size="5.600" font-weight="700" ${M} fill="${['#e9cf23','#2583ca','#d33a3a','#26944a'][i]}">${t}</text>`).join('');
h=`<defs><linearGradient id="wv" x2="0" y2="1"><stop stop-color="#4c4c4c"/><stop offset=".5" stop-color="#eee"/><stop offset="1" stop-color="#4c4c4c"/></linearGradient><linearGradient id="wh"><stop stop-color="#4c4c4c"/><stop offset=".5" stop-color="#eee"/><stop offset="1" stop-color="#4c4c4c"/></linearGradient><linearGradient id="kn" x2="1" y2="1"><stop stop-color="#d5d5d5"/><stop offset="1" stop-color="#707070"/></linearGradient><linearGradient id="kc" x2="1" y2="1"><stop stop-color="#8e8e8e"/><stop offset=".5" stop-color="#f5f5f5"/><stop offset="1" stop-color="#999"/></linearGradient></defs>
<rect x="950" y="191" width="170" height="253" fill="#a7a7a7"/>
<path d="M951.500 191V443.500H1119.500V191M1007.500 191V443M1063.500 191V443M951 205.500H1120M951 317.500H1120M951 333.500H1120M951 191.500H1120" fill="none" stroke="#62625f" stroke-width="1.200"/><path d="M952.500 193V443M1008.800 193V443M1064.800 193V443M951 318.800H1120" stroke="#c8c8c8" stroke-width=".7"/>`;
h+=chan(0,0,'Channel A','#ecd31c',['110','120','130'],'A+B')+chan(56.300,0,'Channel C','#cf353c',['-50','-40','-30'],'C+D')+chan(0,127,'Channel B','#2583ca',['30','40','50'])+chan(56.300,127,'Channel D','#1b8a48',['-130','-120','-110']);
h+=head(977,202,'Trigger','#d0a78f',23)+T(970,212.700,'Level',M)+wheel(970.500,237.500,['-10','0','10'])+`<path d="M955 230l2 4h-1v3h-2v-3h-1zM955 245l2-4h-1v-2.500h-2v2.500h-1z" fill="#c79c86"/>`+T(995.500,216.300,'AC',E)+T(995.500,224.800,'DC',E)+vs(998,208,7,19,0)+vs(998,235,7,19)+'<path d="M991 243h2v-6h2M991 245h2v6h2" fill="none" stroke="#333" stroke-width=".9"/>'+T(996,269,'Auto',E)+btn(997,262,1)+T(996,278,'One-Shot',E)+btn(997,272)+T(996,287.500,'Cursors',E)+btn(997,281.500)+T(979,299.500,'Source',M)+abcd(967,306)+hs(960,307.500,38);
h+=head(978,329,'Horizontal','#d5762b',35)+T(979,341.500,'Source',M)+'<path d="M961 346l4-4M962 342h3v3" stroke="#c87d47" fill="none"/>'+abcd(971,347)+hs(956,349,46)+T(979,364.500,'Position',M)+'<rect x="956" y="366.500" width="47.500" height="22" fill="#a2a2a2" stroke="#444"/><rect x="958" y="370" width="43.500" height="15" fill="url(#wh)"/>'+T(967,379.700,'210',M+' style="fill:#111"')+T(979.500,379.700,'200',M+' style="fill:#111"')+T(991.500,379.700,'190',M+' style="fill:#111"')+'<path d="M976 366.500h6l-3 4zM976 389h6l-3-4z" fill="#e01c1c"/>'+dial(979.500,416,'#d77a35',['200','100','50','20','10','5','2','1','0.5','0.2','50','20','10','5','2','1','0.5'],['ms','µs'],'20u',145);
knobs.innerHTML=h;

// taskbar apps, drawn on a 24x24 field
const A=[['first','<path d="M6 5v3.500h7V5M6 19v-3.500h7V19M6 10.500h7v3H6zM17 5v4.500M17 11v3M17 15.500V19" fill="none" stroke="#ddd" stroke-width="1.200"/>'],
['','<path d="M3 7h18v12q0 2-2 2H5q-2 0-2-2z" fill="#f3f6f7"/><path d="M8 7V3.500h8V7" fill="none" stroke="#5aa7d8" stroke-width="1.400"/><path d="M8.500 10h3v3h-3z" fill="#e84d25"/><path d="M12.500 10h3v3h-3z" fill="#72b72d"/><path d="M8.500 14h3v3h-3z" fill="#1d9be1"/><path d="M12.500 14h3v3h-3z" fill="#f5b61d"/>'],
['run','<path d="M2 10l10-7 10 7v10H2z" fill="#1875c6"/><path d="M4 9h16v6H4z" fill="#f0f5fa"/><path d="M2 10l10 6 10-6v11H2z" fill="#3fa9e9"/>'],
['','<circle cx="12" cy="12" r="10" fill="#1b80cc"/><path d="M3 8q9-9 18 1 2 5-3 6-6 0-4-3 0-5-10-4z" fill="#43c4a5"/><path d="M11 11q-4 6 8 8-9 5-13-2-1-7 5-6z" fill="#1259a5"/>'],
['run','<path d="M2 4h8l2 2h10v14H2z" fill="#efb83c"/><path d="M2 8h20v12H2z" fill="#fbdb73"/><path d="M7 14h10v6h-2.500v-3h-5v3H7z" fill="#498dcf"/>'],
['run','<circle cx="11.500" cy="11" r="9.500" fill="#e23e32"/><path d="M2.500 8a9.500 9.500 0 009 12.500l4-8z" fill="#279b4a"/><path d="M11.500 20.500a9.500 9.500 0 009-12.500h-9z" fill="#f3c42d"/><circle cx="11.500" cy="11" r="4.500" fill="#3e82e6" stroke="#fff" stroke-width="1.500"/><circle cx="17.500" cy="16.500" r="5" fill="#777"/><path d="M19.500 15q-3.500-2-3.500 1t3.500 1.500v-1.500" stroke="#fff" fill="none"/>'],
['run','<path d="M2 4h19l-4 15H7z" fill="#c32420"/><path d="M4 6l4 12 3-9 3 9 5-13" fill="none" stroke="#fff" stroke-width="1.500"/><circle cx="19" cy="18" r="3.200" fill="#dfb27b"/>'],
['run','<path d="M2 3h20v18H2z" fill="#2288e0"/><path d="M2 18l8-9 12 12H2z" fill="#174b98"/><circle cx="17.500" cy="7.500" r="2" fill="#fff"/>'],
['run','<circle cx="12" cy="11" r="9.800" fill="#f1f7f2"/><path d="M2 21l2-7 5 5z" fill="#eee"/><circle cx="12" cy="11" r="8.300" fill="#29b955"/><path d="M8 6h2l1 3-1 1q1 3 4 4l1-1 3 1q-1 4-5 2-6-3-5-10z" fill="#fff"/><circle cx="18.500" cy="17.500" r="5.300" fill="#3a4244" stroke="#ccc" stroke-width=".8"/><text x="16.200" y="20.500" font-size="8" fill="#fff">8</text>'],
['run','<rect x="2" y="2" width="20" height="20" rx="4" fill="#7c7e80"/><circle cx="12" cy="12" r="8.500" fill="#f2f3f4"/><path d="M8 8l4 4 4-4M12 12v5" stroke="#333" stroke-width="1.700" fill="none"/>'],
['run','<path d="M3 3h18v12l-6 6H3z" fill="#f8d817"/><path d="M12 13h9l-6 8h-3z" fill="#5a5230"/>'],
['run','<circle cx="12" cy="12" r="9.300" fill="#171516" stroke="#655d5c"/><path d="M13 21l8-7v7z" fill="#4d4746"/>'],
['run','<path d="M6 10q-1-8 6-8t6 8" fill="none" stroke="#d42d25" stroke-width="4"/><path d="M11 4h3l1 11h-4z" fill="#ddd"/><path d="M7 13l10 7M17 12l-9 8" stroke="#2a86d8" stroke-width="1.800"/><circle cx="8" cy="20" r="2.200" fill="none" stroke="#2a86d8" stroke-width="1.500"/><circle cx="17" cy="20" r="2.200" fill="none" stroke="#2a86d8" stroke-width="1.500"/>'],
['front','<path d="M2 4q-1 6 6 7l4 1 4-1q7-1 6-7M3 12l6 1M21 12l-6 1M4 20q1-5 6-7M20 20q-1-5-6-7" fill="none" stroke="#7c9aa8" stroke-width="1.300"/><circle cx="10" cy="13" r="2" fill="#4b84c2"/><circle cx="14" cy="13" r="2" fill="#a78d4d"/>'],
['run','<circle cx="11" cy="11" r="9" fill="#292627" stroke="#ddd"/><path d="M11 11q-5-6 0-8M11 11q7-2 8 4M11 11q-2 7-8 4" fill="none" stroke="#ddd" stroke-width="2"/><circle cx="16.500" cy="16.500" r="5" fill="#e12722"/>'],
['run','<path d="M2 4h20v16H2z" fill="#080808" stroke="#777"/><path d="M2 4h20v2.500H2z" fill="#bbb"/><path d="M5 10l3 1.500L5 13M9 14h3" stroke="#ddd" fill="none"/>']];
apps.innerHTML=A.map(a=>`<div class="app d-flex align-items-center justify-content-center ${a[0]}"><svg width="21" height="21" viewBox="0 0 24 24">${a[1]}</svg></div>`).join('');
</script>
</body>
</html>
